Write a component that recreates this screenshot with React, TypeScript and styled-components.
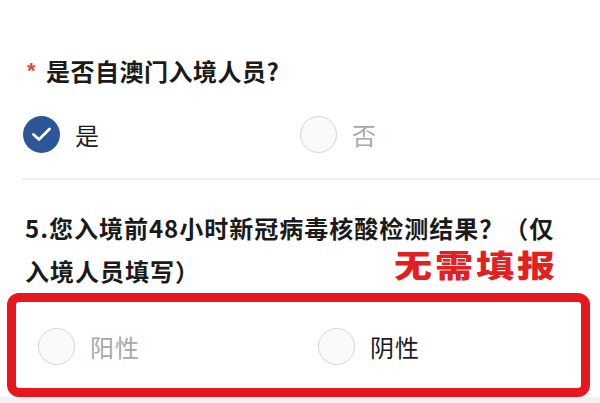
import React from "react";
import styled, { createGlobalStyle } from "styled-components";

const GlobalStyle = createGlobalStyle`
    body {
        margin: 0;
        background-color: #f2f2f2;
        font-family: "Noto Sans CJK SC", "Noto Sans", sans-serif;
        color: #1c1c1c;
    }
`;

const FormCard = styled.div`
    width: 600px;
    background-color: #ffffff;
`;

const Section = styled.section`
    position: relative;
    padding: ${(p: { $pad: string }) => p.$pad};
`;

const QuestionTitle = styled.div`
    font-size: 24px;
    line-height: 30px;
    font-weight: 700;
    letter-spacing: 0.5px;
    color: #1a1a1a;
`;

const Required = styled.span`
    color: #e2483e;
    font-size: 22px;
    font-family: "Liberation Sans", sans-serif;
    vertical-align: 3px;
    margin: 0 10px 0 2px;
`;

const QuestionText = styled.div`
    font-size: 24px;
    line-height: 43px;
    font-weight: 700;
    letter-spacing: 1px;
    color: #1a1a1a;
`;

const OptionRow = styled.div<{ $col: number }>`
    display: grid;
    grid-template-columns: ${(p) => p.$col}px 1fr;
    margin-top: ${(p) => (p.$col === 277 ? "30px" : "0")};
`;

const Option = styled.label<{ $muted?: boolean }>`
    display: flex;
    align-items: center;
    gap: 15px;
    font-size: 24px;
    letter-spacing: 1px;
    color: ${(p) => (p.$muted ? "#a8a8a8" : "#1c1c1c")};
`;

const EmptyRadio = styled.span`
    box-sizing: border-box;
    width: 37px;
    height: 37px;
    border-radius: 50%;
    border: 1.5px solid #d6d6d6;
    background-color: #fafafa;
    flex-shrink: 0;
`;

const Divider = styled.div`
    height: 2px;
    margin-left: 22px;
    background-color: #f0f0f0;
`;

const Stamp = styled.div`
    position: absolute;
    left: 394px;
    top: 70px;
    font-size: 38px;
    line-height: 28px;
    font-weight: 900;
    letter-spacing: 3px;
    color: #e4201f;
    transform: scaleY(0.82);
`;

const AlertBox = styled.div`
    box-sizing: border-box;
    width: 583px;
    margin: 1px 0 0 7px;
    padding: 26px 0 23px 22px;
    border: 9px solid #e8171d;
    border-radius: 12px;
    background-color: #ffffff;
`;

const CheckedRadio = () => (
    <svg width="37" height="37" viewBox="0 0 37 37">
        <circle cx="18.5" cy="18.5" r="18.5" fill="#2d5699" />
        <polyline
            points="10.5,18.5 16,23.5 26.5,13"
            fill="none"
            stroke="#ffffff"
            strokeWidth="2.8"
            strokeLinecap="round"
            strokeLinejoin="round"
        />
    </svg>
);

export default function App() {
    return (
        <>
            <GlobalStyle />
            <FormCard>
                <Section $pad="56px 0 25px 25px">
                    <QuestionTitle>
                        <Required>*</Required>是否自澳门入境人员?
                    </QuestionTitle>
                    <OptionRow $col={277} style={{ marginLeft: -2 }}>
                        <Option>
                            <CheckedRadio />是
                        </Option>
                        <Option $muted>
                            <EmptyRadio />否
                        </Option>
                    </OptionRow>
                </Section>
                <Divider />
                <Section $pad="26px 0 0 25px">
                    <QuestionText>
                        5.您入境前48小时新冠病毒核酸检测结果？（仅
                        <br />
                        入境人员填写）
                    </QuestionText>
                    <Stamp>无需填报</Stamp>
                </Section>
                <AlertBox>
                    <OptionRow $col={280}>
                        <Option $muted>
                            <EmptyRadio />阳性
                        </Option>
                        <Option>
                            <EmptyRadio />阴性
                        </Option>
                    </OptionRow>
                </AlertBox>
            </FormCard>
        </>
    );
}
